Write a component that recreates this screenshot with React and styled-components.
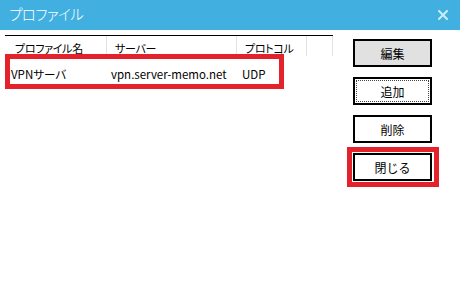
import React from "react";
import styled, { createGlobalStyle } from "styled-components";

const Global = createGlobalStyle`
  html, body { margin: 0; padding: 0; background: #fff; }
  body { font-family: "Noto Sans CJK JP", "Noto Sans", sans-serif; }
`;

const Window = styled.div`
  position: relative;
  width: 460px;
  height: 300px;
  background: #fff;
  overflow: hidden;
`;

const TitleBar = styled.div`
  height: 30px;
  background: #41b0e0;
  display: flex;
  align-items: center;
  justify-content: space-between;
  padding: 0 12px 0 9px;
  box-sizing: border-box;
`;

const Title = styled.div`
  color: #fff;
  font-size: 14.5px;
  font-weight: 300;
  font-feature-settings: "palt";
  letter-spacing: -0.6px;
  line-height: 1;
  margin-top: -1px;
`;

const CloseIcon = styled.svg`
  width: 10px;
  height: 10px;
  display: block;
`;

const Content = styled.div`
  display: flex;
  align-items: flex-start;
`;

const ListView = styled.div`
  margin: 5px 0 0 5px;
  width: 328px;
  font-feature-settings: "palt";
  color: #000;
`;

const HeaderRow = styled.div`
  display: grid;
  grid-template-columns: 102px 130px 70px 26px;
  border-top: 1px solid #000;
  height: 19px;
`;

const HeaderCell = styled.div`
  border-right: 1px solid #e3e3e3;
  padding-left: ${(p) => p.$pad}px;
  display: flex;
  align-items: center;
  padding-top: 4px;
  white-space: nowrap;
  font-size: 11px;
  letter-spacing: -0.3px;
`;

const DataRow = styled.div`
  display: grid;
  grid-template-columns: 102px 130px 70px;
  height: 35px;
  align-items: center;
`;

const DataCell = styled.div`
  padding-left: ${(p) => p.$pad}px;
  white-space: nowrap;
  font-size: 11.5px;
  padding-top: 2px;
`;

const ButtonColumn = styled.div`
  display: flex;
  flex-direction: column;
  gap: 10px;
  margin: 9px 0 0 20px;
`;

const Button = styled.div`
  position: relative;
  width: 79px;
  height: 28px;
  box-sizing: border-box;
  border: 2px solid #000;
  background: ${(p) => (p.$gray ? "#e1e1e1" : "#fff")};
  display: flex;
  align-items: center;
  justify-content: center;
  font-size: 12px;
  color: #000;
  &::after {
    content: "";
    display: ${(p) => (p.$focus ? "block" : "none")};
    position: absolute;
    inset: 1px;
    border: 1px dotted #444;
  }
`;

const Highlight = styled.div`
  position: absolute;
  left: ${(p) => p.$x}px;
  top: ${(p) => p.$y}px;
  width: ${(p) => p.$w}px;
  height: ${(p) => p.$h}px;
  box-sizing: border-box;
  border: 5px solid #e3222b;
  pointer-events: none;
`;

export default function App() {
  return (
    <>
      <Global />
      <Window>
        <TitleBar>
          <Title>プロファイル</Title>
          <CloseIcon viewBox="0 0 10 10">
            <path d="M1 1 L9 9 M9 1 L1 9" stroke="#c9edfb" strokeWidth="2" strokeLinecap="square" />
          </CloseIcon>
        </TitleBar>
        <Content>
          <ListView>
            <HeaderRow>
              <HeaderCell $pad={10}>プロファイル名</HeaderCell>
              <HeaderCell $pad={8}>サーバー</HeaderCell>
              <HeaderCell $pad={8}>プロトコル</HeaderCell>
              <HeaderCell $pad={0} />
            </HeaderRow>
            <DataRow>
              <DataCell $pad={6}>VPNサーバ</DataCell>
              <DataCell $pad={4}>vpn.server-memo.net</DataCell>
              <DataCell $pad={5}>UDP</DataCell>
            </DataRow>
          </ListView>
          <ButtonColumn>
            <Button $gray>編集</Button>
            <Button $focus>追加</Button>
            <Button>削除</Button>
            <Button>閉じる</Button>
          </ButtonColumn>
        </Content>
        <Highlight $x={5} $y={54} $w={279} $h={35} />
        <Highlight $x={347} $y={147} $w={92} $h={40} />
      </Window>
    </>
  );
}
